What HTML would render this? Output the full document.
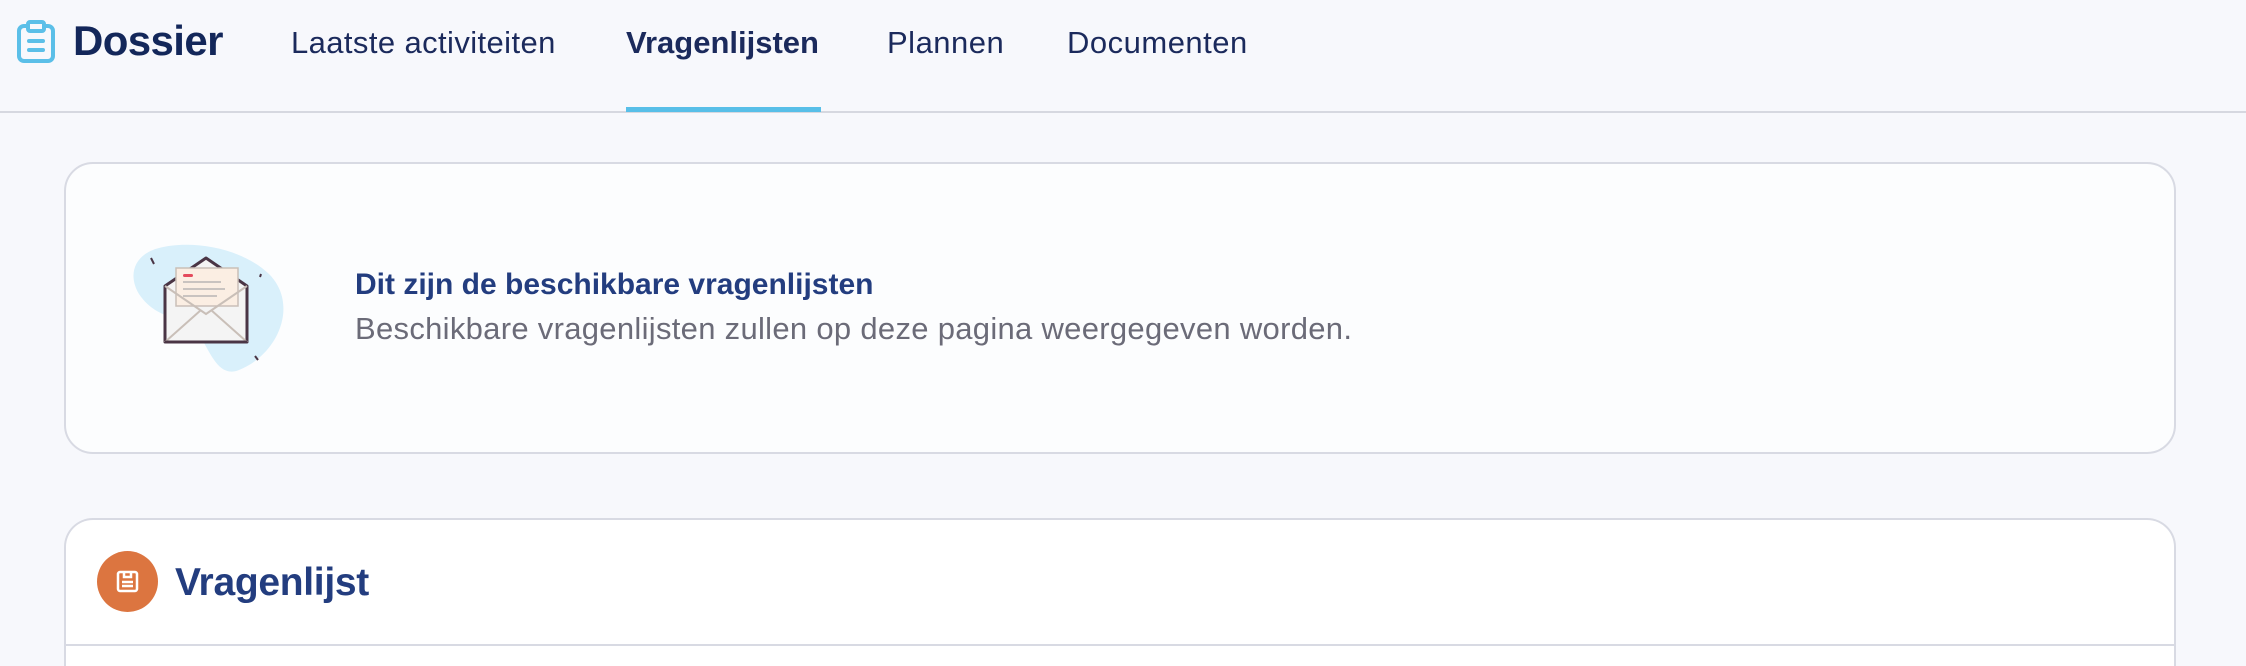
<!DOCTYPE html>
<html><head><meta charset="utf-8"><style>
*{margin:0;padding:0;box-sizing:border-box}
html,body{width:2246px;height:666px;overflow:hidden}
body{background:#f7f8fc;font-family:"Liberation Sans",sans-serif;position:relative}
#wrap{position:absolute;left:0;top:0;width:2246px;height:666px;overflow:hidden}
.hdr{position:absolute;left:0;top:0;width:2246px;height:113px;border-bottom:2px solid #d6d8e0}
.t{position:absolute;white-space:nowrap;color:#1b2a5c}
.nav{font-size:31px;top:25px;letter-spacing:-0.2px}
.card{position:absolute;left:64px;width:2112px;background:#fcfdfe;border:2px solid #d8dae3;border-radius:29px}
</style></head><body><div id="wrap">
<div class="hdr">
<svg style="position:absolute;left:16px;top:20px" width="40" height="44" viewBox="0 0 40 44">
<rect x="3" y="6" width="34" height="35" rx="5" fill="none" stroke="#5bbfe8" stroke-width="4"/>
<rect x="12" y="2" width="16" height="9" rx="2" fill="#f7f8fc" stroke="#5bbfe8" stroke-width="4"/>
<rect x="11" y="19" width="18" height="4" rx="2" fill="#5bbfe8"/>
<rect x="11" y="28" width="18" height="4" rx="2" fill="#5bbfe8"/>
</svg>
<div class="t" style="left:73px;top:17px;font-size:42px;font-weight:bold;letter-spacing:-0.6px;color:#13275a">Dossier</div>
<div class="t nav" style="left:291px;letter-spacing:0.4px">Laatste activiteiten</div>
<div class="t nav" style="left:626px;font-weight:bold;letter-spacing:0px">Vragenlijsten</div>
<div class="t nav" style="left:887px;letter-spacing:0.5px">Plannen</div>
<div class="t nav" style="left:1067px;letter-spacing:0.5px">Documenten</div>
<div style="position:absolute;left:626px;top:107px;width:195px;height:5px;background:#58bfe8"></div>
</div>
<div class="card" style="top:162px;height:292px">
<svg style="position:absolute;left:63px;top:80px" width="170" height="132" viewBox="0 0 170 132">
<path d="M30 4 C60 -4 110 2 140 30 C170 60 150 110 110 126 C90 134 82 110 70 90 C60 70 30 80 10 50 C-2 30 6 10 30 4Z" fill="#d9f0fb"/>
<path d="M36 42 L36 98 L118 98 L118 42 L77 14 Z" fill="#f4f4f4" stroke="#4a3545" stroke-width="3" stroke-linejoin="round"/>
<rect x="47" y="24" width="62" height="38" fill="#fbeee3" stroke="#c9bfb8" stroke-width="1.5"/>
<rect x="54" y="30" width="10" height="3" rx="1.5" fill="#e44a5c"/>
<path d="M54 38 H92 M54 45 H96 M54 52 H88" stroke="#c9c3c0" stroke-width="2"/>
<path d="M36 42 L77 70 L118 42 M36 98 L72 66 M118 98 L82 66" fill="none" stroke="#c9bfb8" stroke-width="2"/>
<path d="M36 98 L118 98" stroke="#4a3545" stroke-width="3"/>
<path d="M22 14 l3 6 M132 30 l-1 3 M126 112 l3 4" stroke="#4a3545" stroke-width="2"/>
</svg>
<div class="t" style="left:289px;top:104px;font-size:30px;font-weight:bold;color:#233d7f;letter-spacing:0px">Dit zijn de beschikbare vragenlijsten</div>
<div class="t" style="left:289px;top:147px;font-size:31px;color:#6b6b78;letter-spacing:0.3px">Beschikbare vragenlijsten zullen op deze pagina weergegeven worden.</div>
</div>
<div class="card" style="top:518px;height:148px;background:#fff;border-bottom:none;border-radius:29px 29px 0 0">
<div style="position:absolute;left:31px;top:31px;width:61px;height:61px;border-radius:50%;background:#dc7540"></div>
<svg style="position:absolute;left:50px;top:50px" width="23" height="23" viewBox="0 0 23 23"><rect x="2" y="2" width="19" height="19" rx="2" fill="none" stroke="#fff" stroke-width="2.5"/><path d="M8 2 v5 h7 v-5 M6 12 h11 M6 16 h11" fill="none" stroke="#fff" stroke-width="2.5"/></svg>
<div class="t" style="left:109px;top:41px;font-size:39px;font-weight:bold;color:#233d7f;letter-spacing:-0.3px">Vragenlijst</div>
<div style="position:absolute;left:0;top:124px;width:2108px;height:2px;background:#d8dae3"></div>
</div>
</div></body></html>
